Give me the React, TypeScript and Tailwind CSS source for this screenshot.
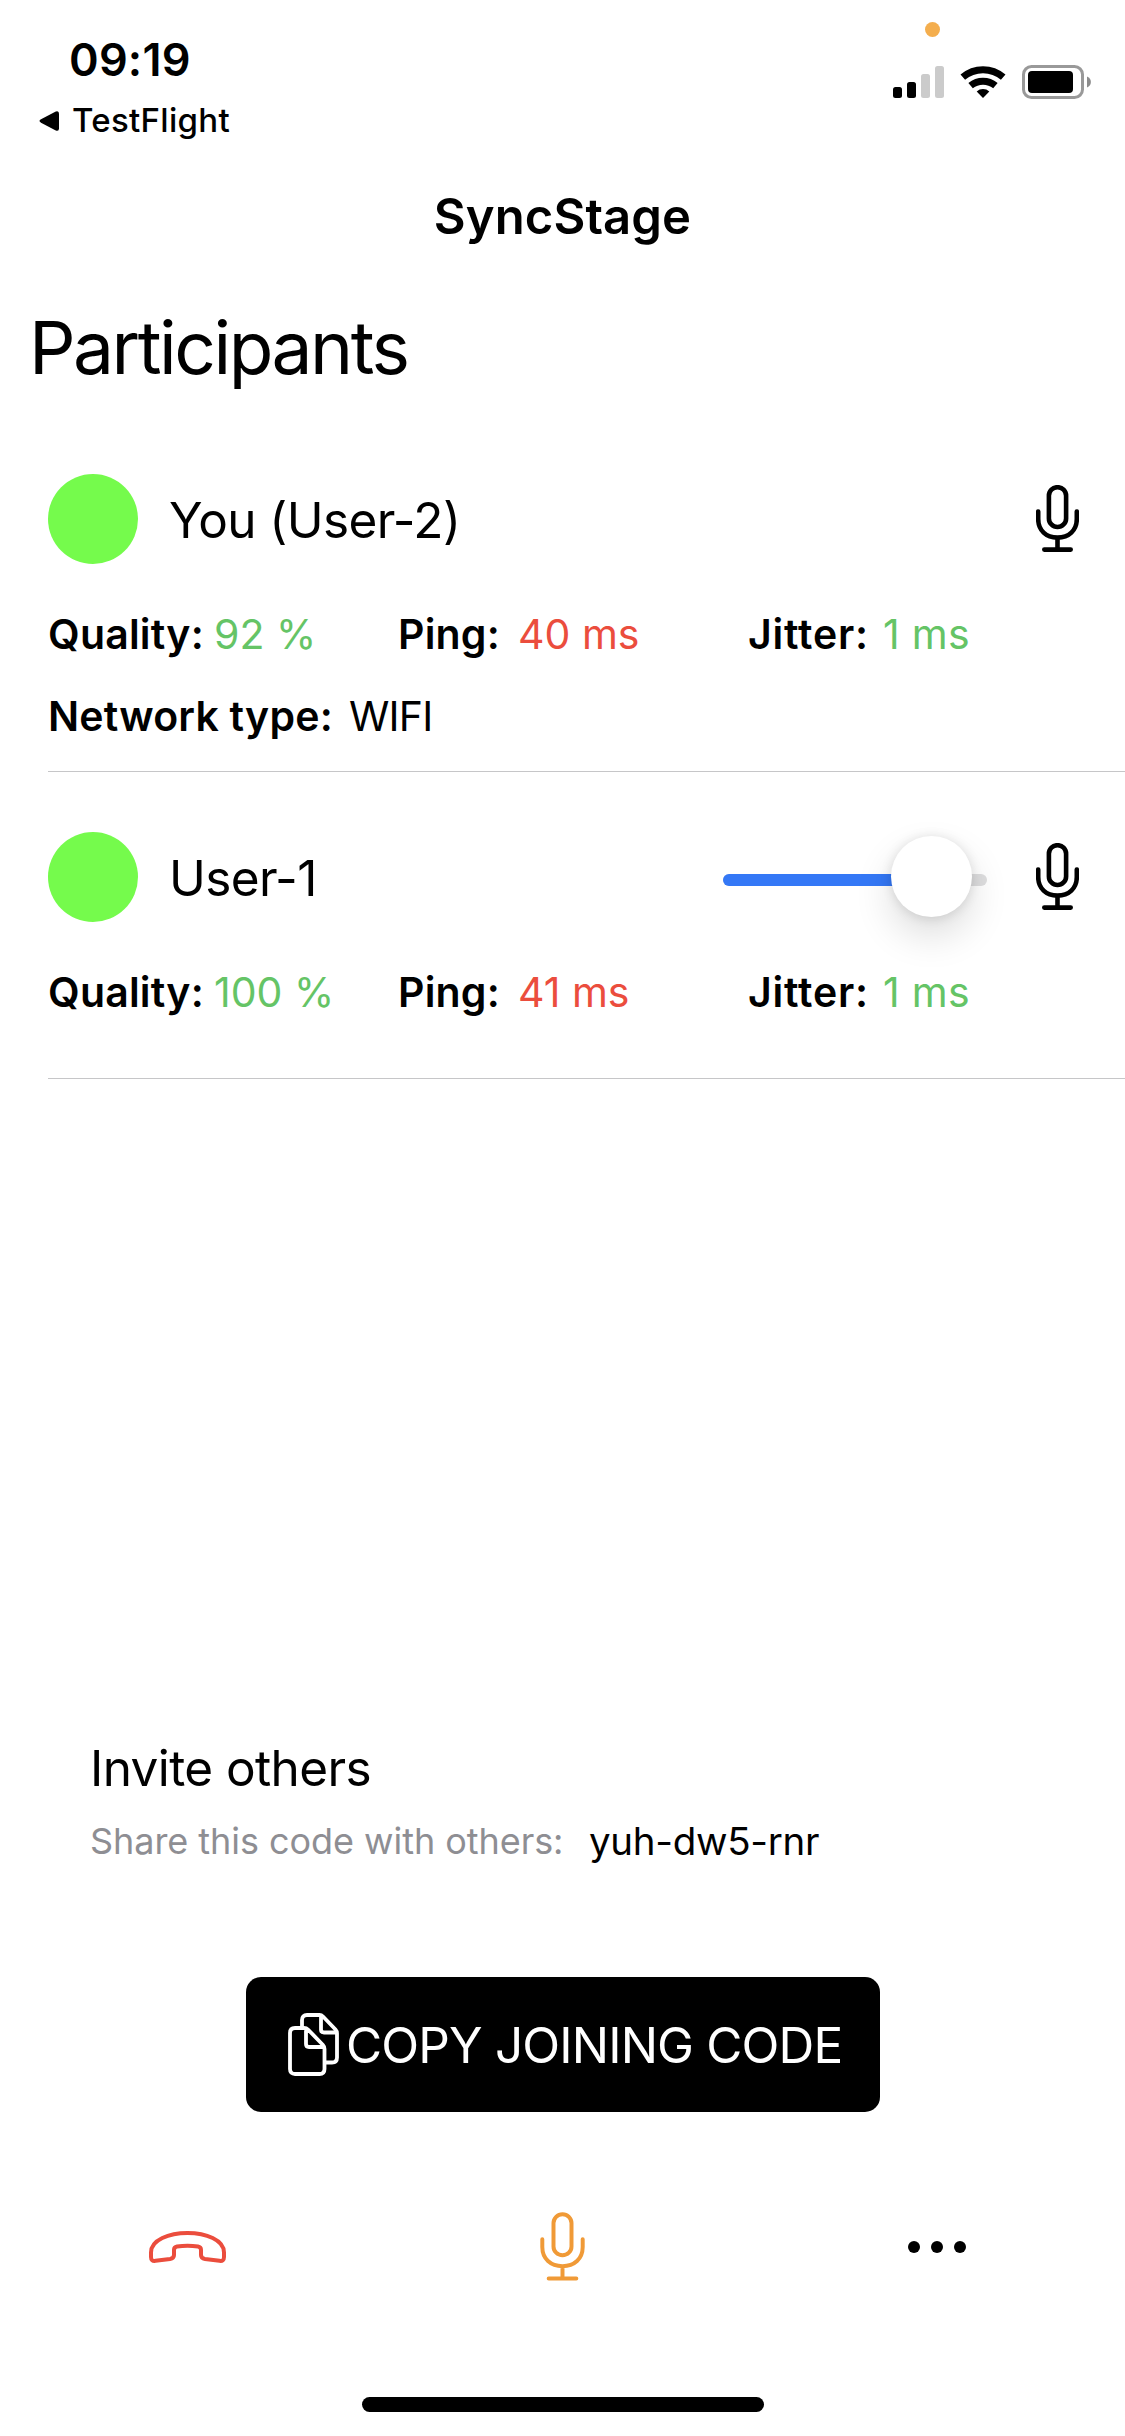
import React from "react";

function MicIcon({ className, thin = false }: { className: string; thin?: boolean }) {
  return (
    <svg viewBox="0 0 43 67" preserveAspectRatio="none" fill="none" stroke="currentColor" strokeWidth={thin ? 3.8 : 4.6} strokeLinecap="round" className={className}>
      <rect x="12.9" y="2.2" width="17.2" height="39.8" rx="8.6" />
      <path d="M2.2 26.5v7.5c0 11.5 8 18.6 19.3 18.6s19.3-7.1 19.3-18.6v-7.5M21.5 53v11.5M8.3 64.6h26.4" />
    </svg>
  );
}

function StatusIcons() {
  return (
    <svg viewBox="0 0 200 40" className="h-10 w-[200px]">
      <rect x="1" y="25" width="9" height="11" rx="2.5" />
      <rect x="15" y="20" width="9" height="16" rx="2.5" />
      <rect x="29" y="12" width="9" height="24" rx="2.5" fill="#cbcbcb" />
      <rect x="43" y="4" width="9" height="32" rx="2.5" fill="#cbcbcb" />
      <g fill="none" stroke="#000" strokeWidth="7">
        <path d="M70.8 15.2a31 31 0 0 1 40.4 0" />
        <path d="M78.6 23.6a19.5 19.5 0 0 1 24.8 0" />
      </g>
      <path d="M91 36l-6.3-6.6a9.6 9.6 0 0 1 12.6 0z" />
      <rect x="131.5" y="4.5" width="59" height="31" rx="8" fill="none" stroke="#999" strokeWidth="3" />
      <rect x="136" y="9" width="45" height="22" rx="4" />
      <path d="M195 14.5c5.2 2 5.2 9 0 11z" fill="#8c8c8c" />
    </svg>
  );
}

function Participant({ name, quality, ping, jitter, slider }: { name: string; quality: string; ping: string; jitter: string; slider?: boolean }) {
  return (
    <>
      <div className="flex h-[90px] items-center pr-[46px]">
        <span className="size-[90px] shrink-0 rounded-full bg-[#75fb4c]" />
        <span className="ml-[31px] grow pt-1 text-[49.5px] leading-none tracking-[-0.6px]">{name}</span>
        {slider && (
          <div className="relative mt-[6px] h-3 w-[264px] rounded-full bg-[#dededf]">
            <div className="h-3 w-[200px] rounded-full bg-[#3478f6]" />
            <div className="absolute -top-[38px] left-[168px] size-[81px] rounded-full bg-white shadow-[0_1px_12px_rgba(0,0,0,0.12),0_18px_39px_rgba(0,0,0,0.14)]" />
          </div>
        )}
        <MicIcon className="-mt-px ml-[49px] h-[67px] w-[43px]" />
      </div>
      <div className="mt-[46px] flex h-[50px] items-center text-[41px]">
        <div className="flex w-[350px]">
          <b className="w-[166px] font-semibold tracking-[0.2px]">Quality:</b>
          <span className="text-[#65c466]">{quality}</span>
        </div>
        <div className="flex w-[350px]">
          <b className="w-[120px] font-semibold tracking-[0.2px]">Ping:</b>
          <span className="text-[#eb4d3d]">{ping}</span>
        </div>
        <b className="w-[135px] font-semibold tracking-[0.8px]">Jitter:</b>
        <span className="tracking-[0.3px] text-[#65c466]">{jitter}</span>
      </div>
    </>
  );
}

export default function App() {
  return (
    <div className="flex h-[2436px] w-[1125px] flex-col whitespace-nowrap bg-white font-['Inter',sans-serif] text-black">
      <header className="relative flex h-[150px] justify-between pr-[33px]">
        <div className="pt-[30px]">
          <div className="ml-[69px] h-[60px] text-[45px] font-semibold leading-[60px] tracking-[0.2px]">09:19</div>
          <div className="ml-[39px] mt-[10px] flex h-[41px] items-center text-[33px] font-medium tracking-[0.3px]">
            <svg viewBox="0 0 20 20" className="mr-[13px] size-5">
              <path d="M2 8.3 16.8.6Q20 -.6 20 2.8v14.4q0 3.4-3.2 2.2L2 11.7Q-1 10 2 8.3z" />
            </svg>
            TestFlight
          </div>
        </div>
        <div className="pt-[62px]">
          <StatusIcons />
        </div>
        <span className="absolute left-[925px] top-[22px] size-[15px] rounded-full bg-[#f4ae4e]" />
      </header>

      <div className="flex h-[134px] items-center justify-center text-[49px] font-semibold tracking-[0.1px]">SyncStage</div>
      <h1 className="ml-[29px] h-[127px] text-[73px] leading-[127px] tracking-[-2.5px]">Participants</h1>

      <section className="ml-12 h-[361px] border-b border-[#c6c6c8] pt-[63px]">
        <Participant name="You (User-2)" quality="92 %" ping="40 ms" jitter="1 ms" />
        <div className="mt-[32px] flex h-[50px] items-center text-[41px]">
          <b className="w-[301px] font-semibold tracking-[0.2px]">Network type:</b>
          <span className="tracking-[-0.8px]">WIFI</span>
        </div>
      </section>
      <section className="ml-12 h-[307px] border-b border-[#c6c6c8] pt-[60px]">
        <Participant name="User-1" quality="100 %" ping="41 ms" jitter="1 ms" slider />
      </section>

      <section className="ml-[90px] mt-[659px] h-[160px]">
        <div className="h-[60px] text-[49.5px] leading-[60px] tracking-[-0.6px]">Invite others</div>
        <div className="mt-[18px] flex h-[50px] items-center">
          <span className="w-[499px] text-[36px] tracking-[-0.05px] text-[#8e8e93]">Share this code with others:</span>
          <span className="pt-px text-[38.5px] tracking-[-0.3px]">yuh-dw5-rnr</span>
        </div>
      </section>

      <button className="ml-[246px] mt-[79px] flex h-[135px] w-[634px] items-center rounded-[15px] bg-black pl-[42px] text-white">
        <svg viewBox="0 0 51 63" className="h-[63px] w-[51px]" fill="none" stroke="currentColor" strokeWidth="3.8" strokeLinejoin="round">
          <path d="M14 15V7q0-5 5-5h12.500q2 0 3.500 1.500l12.500 13q1.500 1.500 1.500 4v24q0 5-5 5h-6M33 3v13.500q0 3 3 3h12.500" />
          <path d="M7 15h9q2.500 0 4 1.500l15 15.500q1.500 1.500 1.500 4v20q0 5-5 5H7q-5 0-5-5V20q0-5 5-5zM18 16v15q0 3 3 3h15" />
        </svg>
        <span className="ml-[7px] pt-[2px] text-[49.5px] tracking-[-0.85px]">COPY JOINING CODE</span>
      </button>

      <nav className="mt-[95px] flex h-[80px] items-center">
        <svg viewBox="0 0 77 32" className="ml-[149px] h-8 w-[77px] text-[#eb4d3d]" fill="none" stroke="currentColor" strokeWidth="4" strokeLinejoin="round">
          <path d="M2 21.500C2 9 20 2 38.500 2S75 9 75 21.500V26q0 4.500-4.500 3.800L56 28q-4-.6-4-4v-5q0-3-3-3.500-10.500-1.500-21 0-3 .5-3 3.500v5q0 3.400-4 4L6.500 29.800Q2 30.500 2 26z" />
        </svg>
        <MicIcon thin className="-mt-px ml-[314px] h-[69px] w-[45px] text-[#f09a37]" />
        <div className="ml-[323px] flex gap-[11.200px]">
          <span className="size-3 rounded-full bg-black" />
          <span className="size-3 rounded-full bg-black" />
          <span className="size-3 rounded-full bg-black" />
        </div>
      </nav>

      <div className="ml-[362px] mt-[110px] h-[15px] w-[402px] rounded-full bg-black" />
    </div>
  );
}
